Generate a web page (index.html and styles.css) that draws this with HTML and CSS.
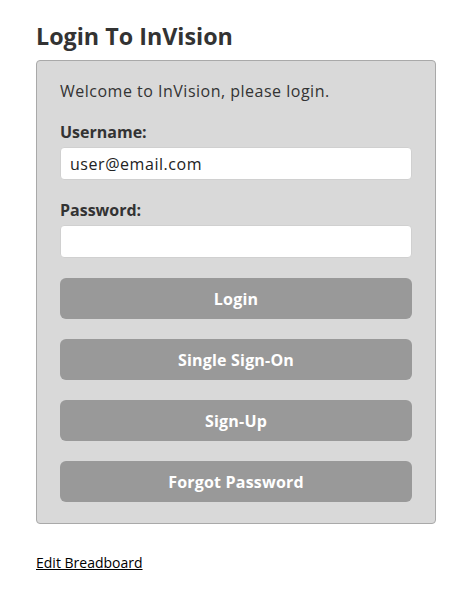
FILE: index.html
```html
<!DOCTYPE html>
<html lang="en">
<head>
    <meta charset="UTF-8">
    <meta name="viewport" content="width=device-width, initial-scale=1.0">
    <title>Login To InVision</title>
    <link rel="stylesheet" href="styles.css">
</head>
<body>
    <div class="page">
        <h1>Login To InVision</h1>
        <form class="login-box">
            <p class="welcome">Welcome to InVision, please login.</p>

            <label for="username">Username:</label>
            <input type="text" id="username" name="username" value="user@email.com">

            <label for="password">Password:</label>
            <input type="password" id="password" name="password">

            <div class="actions">
                <button type="button" class="btn">Login</button>
                <button type="button" class="btn">Single Sign-On</button>
                <button type="button" class="btn">Sign-Up</button>
                <button type="button" class="btn">Forgot Password</button>
            </div>
        </form>

        <a class="edit-link" href="#">Edit Breadboard</a>
    </div>
</body>
</html>
```

FILE: styles.css
```css
/* General Styles */
body {
    margin: 0;
    padding: 0;
    font-family: 'Open Sans', sans-serif;
    background-color: #fff;
    color: #333;
}

.page {
    width: 400px;
    padding: 20px 36px;
}

h1 {
    font-size: 23.3px;
    font-weight: bold;
    line-height: 32px;
    margin: 0 0 8px;
    color: #333;
}

.login-box {
    background-color: #d9d9d9;
    border: 1px solid #a9a9a9;
    border-radius: 4px;
    padding: 17px 23px 21px;
}

.welcome {
    margin: 0 0 17px;
    font-size: 16px;
    line-height: 26px;
    letter-spacing: 0.5px;
}

label {
    display: block;
    font-size: 16px;
    font-weight: bold;
    line-height: 22px;
    margin-bottom: 4px;
}

input {
    display: block;
    box-sizing: border-box;
    width: 100%;
    height: 33px;
    margin: 0 0 19px;
    padding: 0 9px;
    border: 1px solid #d0d0d0;
    border-radius: 4px;
    background-color: #fff;
    font-family: 'Open Sans', sans-serif;
    font-size: 16px;
    letter-spacing: 0.55px;
    color: #222;
}

.actions {
    display: flex;
    flex-direction: column;
    gap: 20px;
    margin-top: 20px;
}

.btn {
    height: 41px;
    border: none;
    border-radius: 6px;
    background-color: #999;
    color: #fff;
    font-family: 'Open Sans', sans-serif;
    font-size: 16px;
    font-weight: bold;
    letter-spacing: 0.2px;
    cursor: pointer;
}

.edit-link {
    display: inline-block;
    margin-top: 29px;
    font-size: 14px;
    line-height: 20px;
    color: #000;
}
```
